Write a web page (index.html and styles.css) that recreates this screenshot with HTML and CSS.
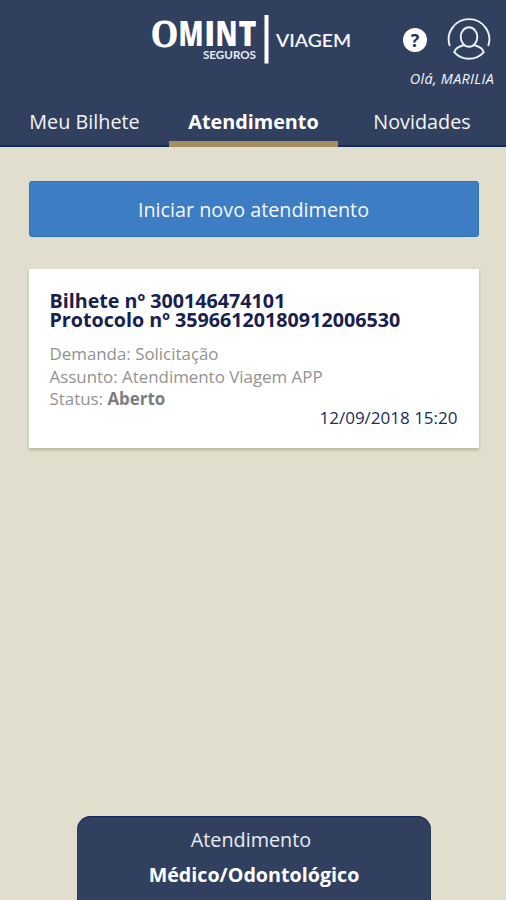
FILE: index.html
```html
<!DOCTYPE html>
<html lang="pt-BR">
<head>
<meta charset="utf-8">
<title>Omint Seguros Viagem</title>
<link rel="stylesheet" href="styles.css">
</head>
<body>
<div class="app">
  <header class="header">
    <div class="topbar">
      <svg class="logo" width="202" height="56" viewBox="0 0 202 56">
        <text class="logo-initial" x="0" y="38.500" font-size="41" textLength="27" lengthAdjust="spacingAndGlyphs">O</text>
        <text class="logo-name" x="27.500" y="38" textLength="25" lengthAdjust="spacingAndGlyphs">M</text>
        <text class="logo-name" x="53.200" y="38" textLength="11" lengthAdjust="spacingAndGlyphs">I</text>
        <text class="logo-name" x="64.500" y="38" textLength="22" lengthAdjust="spacingAndGlyphs">N</text>
        <text class="logo-name" x="87.500" y="38" textLength="18" lengthAdjust="spacingAndGlyphs">T</text>
        <text class="logo-sub" x="52" y="50.500" textLength="53" lengthAdjust="spacingAndGlyphs">SEGUROS</text>
        <rect x="113.500" y="7" width="4" height="48.500" fill="#fff"/>
        <text class="logo-product" x="125" y="38.500" textLength="75" lengthAdjust="spacingAndGlyphs">VIAGEM</text>
      </svg>
      <div class="help">?</div>
      <div class="account">
        <svg width="44" height="44" viewBox="0 0 44 44" fill="none" stroke="#eef2fa" stroke-width="1.900">
          <path d="M2.800 29A20.300 20.300 0 1 1 41.200 29"/>
          <ellipse cx="22" cy="20" rx="8.300" ry="9.800"/>
          <path d="M17 28C12 29.500 8.200 31.200 7.200 35.200C15 44 29 44 36.800 35.200C35.800 31.200 32 29.500 27 28"/>
        </svg>
        <div class="greeting">Olá, MARILIA</div>
      </div>
    </div>
    <nav class="tabs">
      <a class="tab">Meu Bilhete</a>
      <a class="tab tab-active">Atendimento</a>
      <a class="tab">Novidades</a>
    </nav>
  </header>
  <main class="content">
    <div class="start-button">Iniciar novo atendimento</div>
    <article class="card">
      <h2 class="card-title">Bilhete nº 300146474101<br>Protocolo nº 35966120180912006530</h2>
      <p class="row">Demanda: Solicitação</p>
      <p class="row">Assunto: Atendimento Viagem APP</p>
      <p class="row">Status: <b>Aberto</b></p>
      <time class="date">12/09/2018 15:20</time>
    </article>
  </main>
  <footer class="support">
    <div class="support-title">Atendimento</div>
    <div class="support-kind">Médico/Odontológico</div>
  </footer>
</div>
</body>
</html>
```

FILE: styles.css
```css
* { box-sizing: border-box; }
body { margin: 0; font-family: "Open Sans", "Noto Sans", sans-serif; }
.app { height: 900px; display: flex; flex-direction: column; align-items: center; background: #e1decd; overflow: hidden; }
.header { width: 100%; height: 147px; background: #30405e; border-bottom: 2px solid #142c56; }
.topbar { height: 98px; display: flex; padding: 8px 12px 0 151px; }
.logo { flex: none; overflow: visible; }
.logo-initial { font-family: "Liberation Serif", serif; font-weight: 700; fill: #fff; stroke: #fff; stroke-width: .8; }
.logo-name { font-weight: 800; font-size: 34.5px; fill: #fff; }
.logo-sub { font-family: Lato, sans-serif; font-weight: 700; font-size: 10.5px; fill: #e8ecf4; }
.logo-product { font-family: Lato, sans-serif; font-weight: 600; font-size: 18px; fill: #f4f6fa; }
.help { flex: none; width: 24px; height: 24px; margin: 20px 0 0 50px; border-radius: 50%; background: #fff; color: #263552; font-size: 18px; font-weight: 700; line-height: 24px; text-align: center; }
.account { margin: 9px 0 0 -19px; width: 86px; display: flex; flex: none; flex-direction: column; align-items: flex-end; }
.account svg { margin-right: 3px; }
.greeting { margin-top: 9px; font-size: 14.4px; line-height: 18px; font-style: italic; font-weight: 500; letter-spacing: .3px; color: #f1f4fb; white-space: nowrap; }
.tabs { height: 49px; display: grid; grid-template-columns: 169px 169px 168px; }
.tab { height: 49px; color: #f3f6fb; font-size: 19.8px; line-height: 48px; text-align: center; }
.tab-active { color: #fff; font-weight: 700; border-bottom: 6px solid #a38f60; }
.content { width: 450px; margin: 34px 0 0 1px; }
.start-button { height: 56px; border-radius: 4px; background: #3d7dc3; box-shadow: inset 0 0 0 1px #2d74bb; color: #f5f9ff; font-size: 19.8px; line-height: 57px; text-align: center; }
.card { display: flex; flex-direction: column; height: 179px; margin-top: 32px; padding: 22px 21px 0; background: #fff; box-shadow: 0 2px 3px rgba(80, 75, 55, .3); }
.card-title { margin: 0 0 14px; font-size: 19.7px; line-height: 19px; font-weight: 700; color: #17204e; white-space: nowrap; }
.row { margin: 0; font-size: 16.9px; line-height: 22.5px; color: #929292; }
.row b { color: #7d7d7d; }
.date { align-self: flex-end; margin-top: -4px; font-size: 17px; line-height: 22px; color: #202c58; }
.support { width: 354px; height: 84px; margin: auto 0 0 2px; padding-top: 10px; border-radius: 14px 14px 0 0; background: #30405e; box-shadow: inset 0 1px 1px #10265b; color: #fff; text-align: center; font-size: 19.8px; }
.support-title { line-height: 27px; margin-right: 6px; color: #e8ecf4; }
.support-kind { margin-top: 8px; line-height: 27px; font-weight: 700; font-size: 19.7px; }
```
